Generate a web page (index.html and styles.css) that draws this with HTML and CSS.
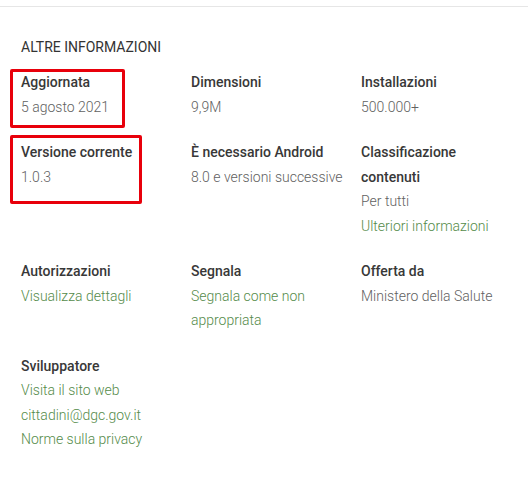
FILE: index.html
```html
<!doctype html>
<html lang="it">
	<head>
	<meta charset="utf-8">
	<title>Altre informazioni</title>
	<link rel="stylesheet" href="styles.css">
	</head>
	<body>

		<div class="page">
			<hr class="divider">

			<section class="info">
				<h2 class="info-title">ALTRE INFORMAZIONI</h2>

				<div class="info-grid">
					<div class="info-item">
						<div class="info-label">Aggiornata</div>
						<div class="info-value">5 agosto 2021</div>
					</div>
					<div class="info-item">
						<div class="info-label">Dimensioni</div>
						<div class="info-value">9,9M</div>
					</div>
					<div class="info-item">
						<div class="info-label">Installazioni</div>
						<div class="info-value">500.000+</div>
					</div>

					<div class="info-item">
						<div class="info-label">Versione corrente</div>
						<div class="info-value">1.0.3</div>
					</div>
					<div class="info-item">
						<div class="info-label">È necessario Android</div>
						<div class="info-value">8.0 e versioni successive</div>
					</div>
					<div class="info-item">
						<div class="info-label">Classificazione contenuti</div>
						<div class="info-value">Per tutti</div>
						<a class="info-link" href="#">Ulteriori informazioni</a>
					</div>

					<div class="info-item">
						<div class="info-label">Autorizzazioni</div>
						<a class="info-link" href="#">Visualizza dettagli</a>
					</div>
					<div class="info-item">
						<div class="info-label">Segnala</div>
						<a class="info-link" href="#">Segnala come non appropriata</a>
					</div>
					<div class="info-item">
						<div class="info-label">Offerta da</div>
						<div class="info-value">Ministero della Salute</div>
					</div>

					<div class="info-item">
						<div class="info-label">Sviluppatore</div>
						<a class="info-link" href="#">Visita il sito web</a>
						<a class="info-link" href="#">cittadini@dgc.gov.it</a>
						<a class="info-link" href="#">Norme sulla privacy</a>
					</div>
				</div>
			</section>

			<!-- annotation boxes drawn over the screenshot -->
			<div class="mark mark-updated"></div>
			<div class="mark mark-version"></div>
		</div>

	</body>
</html>
```

FILE: styles.css
```css
html, body {
	margin: 0;
	padding: 0;
	background: #fff;
}

body {
	font-family: Roboto, "Liberation Sans", sans-serif;
	color: #333;
}

.page {
	position: relative;
	width: 528px;
	height: 492px;
	padding-top: 6px;
	box-sizing: border-box;
}

.divider {
	margin: 0;
	border: 0;
	border-top: 1px solid #e6e6e6;
}

.info {
	padding: 0 0 0 21px;
}

.info-title {
	margin: 30px 0 0;
	font-size: 14px;
	font-weight: 400;
	line-height: 20px;
	color: #333;
}

.info-grid {
	display: grid;
	grid-template-columns: 170px 170px 150px;
	row-gap: 21px;
	margin-top: 13px;
}

.info-item {
	display: flex;
	flex-direction: column;
	align-items: flex-start;
	font-size: 14px;
	line-height: 24.5px;
}

.info-label {
	font-weight: 500;
	color: #383838;
}

.info-item:nth-child(6) .info-label {
	width: 120px;
}

.info-item:nth-child(8) .info-link {
	width: 150px;
}

.info-value {
	font-weight: 300;
	color: #616161;
}

.info-link {
	font-weight: 300;
	color: #558b4a;
	text-decoration: none;
}

.mark {
	position: absolute;
	left: 10px;
	border: 3px solid #e8000b;
	border-radius: 2px;
	box-sizing: border-box;
}

.mark-updated {
	top: 69px;
	width: 115px;
	height: 59px;
}

.mark-version {
	top: 135px;
	width: 132px;
	height: 69px;
}
```
